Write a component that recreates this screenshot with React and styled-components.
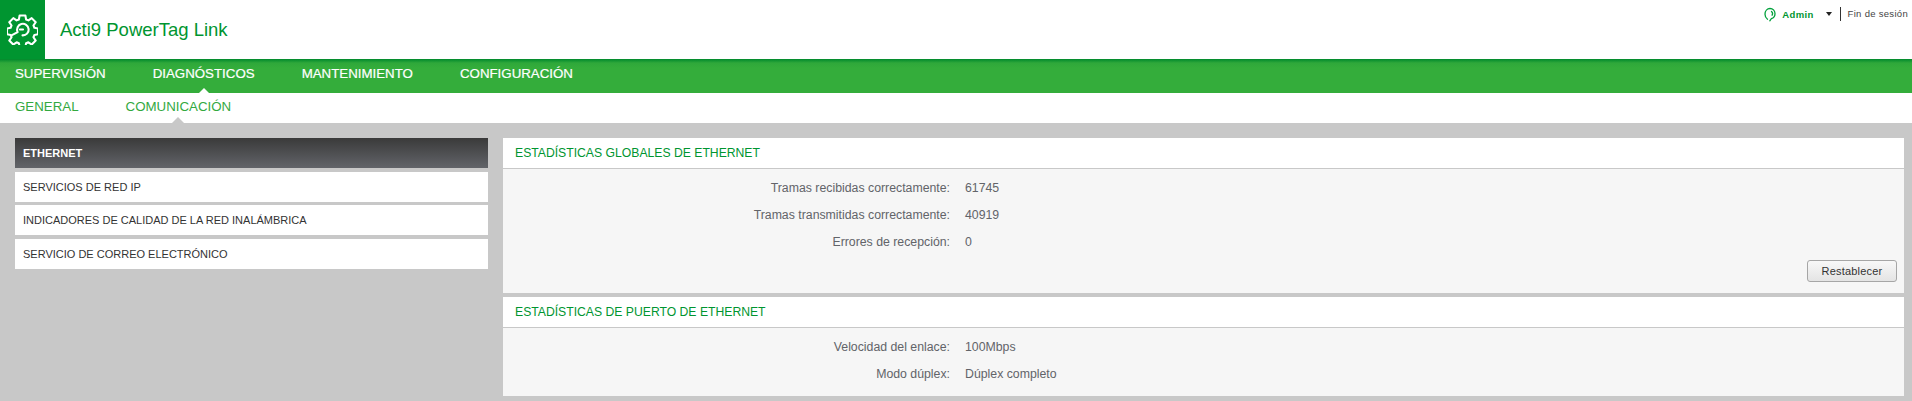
import React from "react";
import styled, { createGlobalStyle } from "styled-components";

const Global = createGlobalStyle`
  html, body { margin: 0; padding: 0; background: #c8c8c8; }
  body { font-family: "Liberation Sans", Arial, sans-serif; }
`;

const Page = styled.div`
  width: 1912px;
  height: 401px;
  display: flex;
  flex-direction: column;
  overflow: hidden;
  background: #c8c8c8;
`;

const Header = styled.header`
  height: 59px;
  background: #fff;
  display: flex;
  align-items: flex-start;
  justify-content: space-between;
`;

const Brand = styled.div`
  display: flex;
  align-items: center;
  height: 59px;
`;

const LogoBox = styled.div`
  width: 45px;
  height: 59px;
  background: #009530;
  display: flex;
  align-items: center;
  justify-content: center;
`;

const AppTitle = styled.h1`
  margin: 0 0 0 15px;
  font-size: 18.5px;
  font-weight: 400;
  color: #009530;
`;

const UserBar = styled.div`
  display: flex;
  align-items: center;
  height: 14px;
  margin-top: 7px;
  padding-right: 4px;
  font-size: 9.5px;
`;

const UserName = styled.span`
  margin-left: 6px;
  color: #009530;
  font-weight: 700;
  letter-spacing: 0.35px;
`;

const Caret = styled.span`
  margin-left: 12px;
  width: 0;
  height: 0;
  border-left: 3.5px solid transparent;
  border-right: 3.5px solid transparent;
  border-top: 4px solid #222;
`;

const Logout = styled.span`
  margin-left: 8px;
  padding-left: 7px;
  border-left: 1px solid #333;
  height: 14px;
  line-height: 14px;
  color: #444;
  letter-spacing: 0.3px;
`;

const MainNav = styled.nav`
  height: 34px;
  background: linear-gradient(to bottom, #00892c 0, #2fa83a 4px, #34ad3b 9px);
  display: flex;
  gap: 47px;
  padding-left: 15px;
`;

const MainTab = styled.a`
  position: relative;
  height: 31px;
  line-height: 30px;
  font-size: 13.3px;
  color: #fff;
  -webkit-text-stroke: 0.2px #fff;
  &::after {
    content: "";
    display: ${(p) => (p.$active ? "block" : "none")};
    position: absolute;
    left: 50%;
    bottom: -3px;
    margin-left: -5px;
    border-left: 5px solid transparent;
    border-right: 5px solid transparent;
    border-bottom: 5px solid #fff;
  }
`;

const SubNav = styled.nav`
  height: 30px;
  background: #fff;
  display: flex;
  gap: 47px;
  padding-left: 15px;
`;

const SubTab = styled.a`
  position: relative;
  line-height: 28px;
  font-size: 13.3px;
  color: #33a93f;
  &::after {
    content: "";
    display: ${(p) => (p.$active ? "block" : "none")};
    position: absolute;
    left: 50%;
    bottom: 0;
    margin-left: -6px;
    border-left: 6px solid transparent;
    border-right: 6px solid transparent;
    border-bottom: 6px solid #c8c8c8;
  }
`;

const Content = styled.main`
  flex: 1;
  display: flex;
  gap: 15px;
  padding: 15px 8px 0 15px;
`;

const SideMenu = styled.ul`
  list-style: none;
  margin: 0;
  padding: 0;
  width: 473px;
  display: flex;
  flex-direction: column;
  gap: 3.6px;
`;

const SideItem = styled.li`
  height: 30px;
  line-height: 30px;
  padding-left: 8px;
  font-size: 11px;
  color: ${(p) => (p.$active ? "#fff" : "#333")};
  font-weight: ${(p) => (p.$active ? 700 : 400)};
  background: ${(p) =>
    p.$active ? "linear-gradient(to bottom, #3a3a3a, #626469)" : "#fff"};
`;

const Panels = styled.div`
  flex: 1;
  display: flex;
  flex-direction: column;
  gap: 4px;
`;

const Panel = styled.section`
  background: #f6f6f6;
  height: ${(p) => p.$height}px;
  display: flex;
  flex-direction: column;
`;

const PanelTitle = styled.h2`
  margin: 0;
  height: 30px;
  line-height: 30px;
  padding-left: 12px;
  background: #fff;
  border-bottom: 1px solid #c8c8c8;
  box-sizing: content-box;
  font-size: 12.2px;
  font-weight: 400;
  color: #009530;
`;

const Rows = styled.div`
  display: flex;
  flex-direction: column;
  padding-top: 6px;
`;

const Row = styled.div`
  display: flex;
  height: 27px;
  line-height: 27px;
  font-size: 12.3px;
  color: #626469;
`;

const Label = styled.span`
  width: 447px;
  text-align: right;
`;

const Value = styled.span`
  margin-left: 15px;
`;

const Actions = styled.div`
  display: flex;
  justify-content: flex-end;
  padding: 4px 7px 0 0;
`;

const Button = styled.button`
  width: 90px;
  height: 22px;
  padding: 0;
  border: 1px solid #a6a6a6;
  border-radius: 3px;
  background: linear-gradient(to bottom, #f8f8f8, #e4e4e4);
  font-family: inherit;
  font-size: 11px;
  color: #333;
  letter-spacing: 0.2px;
`;

const GearIcon = () => (
  <svg width="31" height="31" viewBox="0 0 30 30" fill="none" stroke="#fff" strokeWidth="2" strokeLinejoin="round" strokeLinecap="round">
    <path d="M12.2 1.500h5.600l.7 3.800 2.200.9 3.200-2.200 3.900 3.900-2.200 3.200.9 2.200 3.500.7v5.600l-3.500.7-.9 2.200 2.200 3.200-3.900 3.900-3.200-2.200-2.200.9-.7 3.500h-5.600l-.7-3.500-2.200-.9-3.200 2.200-3.900-3.900 2.200-3.200-.9-2.200-3.500-.7v-5.600l3.500-.7.9-2.200-2.200-3.200 3.900-3.900 3.200 2.200 2.200-.9z" />
    <path d="M4.800 20.500 10.300 17.500A5.600 5.600 0 1 1 15 20.700" />
    <path d="M15.500 15H12.500" />
  </svg>
);

const UserIcon = () => (
  <svg width="12" height="15" viewBox="0 0 12 15" fill="none" stroke="#00a13b" strokeWidth="1.300" strokeLinecap="round">
    <path d="M3.500 12.200C1.800 11 1 9.300 1 7.200 1 3.800 3.200 1.500 6 1.500s5 2.300 5 5.300c0 2.500-1.500 4.300-3.700 4.900L5.800 13.800" />
    <path d="M7.500 4.500c1 .8 1.300 2.500.6 3.800" />
  </svg>
);

const stats = [
  ["Tramas recibidas correctamente:", "61745"],
  ["Tramas transmitidas correctamente:", "40919"],
  ["Errores de recepción:", "0"],
];
const port = [
  ["Velocidad del enlace:", "100Mbps"],
  ["Modo dúplex:", "Dúplex completo"],
];

const renderRows = (items) => (
  <Rows>
    {items.map(([k, v]) => (
      <Row key={k}>
        <Label>{k}</Label>
        <Value>{v}</Value>
      </Row>
    ))}
  </Rows>
);

export default function App() {
  return (
    <Page>
      <Global />
      <Header>
        <Brand>
          <LogoBox><GearIcon /></LogoBox>
          <AppTitle>Acti9 PowerTag Link</AppTitle>
        </Brand>
        <UserBar>
          <UserIcon />
          <UserName>Admin</UserName>
          <Caret />
          <Logout>Fin de sesión</Logout>
        </UserBar>
      </Header>
      <MainNav>
        <MainTab>SUPERVISIÓN</MainTab>
        <MainTab $active>DIAGNÓSTICOS</MainTab>
        <MainTab>MANTENIMIENTO</MainTab>
        <MainTab>CONFIGURACIÓN</MainTab>
      </MainNav>
      <SubNav>
        <SubTab>GENERAL</SubTab>
        <SubTab $active>COMUNICACIÓN</SubTab>
      </SubNav>
      <Content>
        <SideMenu>
          <SideItem $active>ETHERNET</SideItem>
          <SideItem>SERVICIOS DE RED IP</SideItem>
          <SideItem>INDICADORES DE CALIDAD DE LA RED INALÁMBRICA</SideItem>
          <SideItem>SERVICIO DE CORREO ELECTRÓNICO</SideItem>
        </SideMenu>
        <Panels>
          <Panel $height={155}>
            <PanelTitle>ESTADÍSTICAS GLOBALES DE ETHERNET</PanelTitle>
            {renderRows(stats)}
            <Actions><Button>Restablecer</Button></Actions>
          </Panel>
          <Panel $height={99}>
            <PanelTitle>ESTADÍSTICAS DE PUERTO DE ETHERNET</PanelTitle>
            {renderRows(port)}
          </Panel>
        </Panels>
      </Content>
    </Page>
  );
}
